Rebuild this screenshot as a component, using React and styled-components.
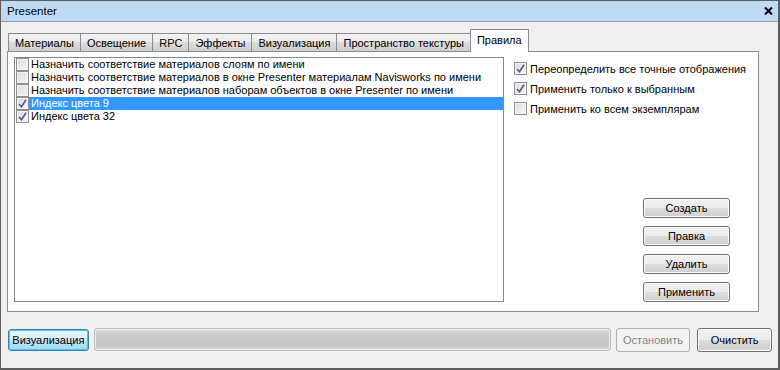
import React from "react";
import styled, { createGlobalStyle, css } from "styled-components";

const GlobalStyle = createGlobalStyle`
    html, body {
        margin: 0;
        padding: 0;
        background: #f0f0f0;
    }
    body {
        font-family: "Liberation Sans", Arial, sans-serif;
        font-size: 11px;
        color: #000;
    }
`;

const Window = styled.div`
    width: 780px;
    height: 370px;
    box-sizing: border-box;
    border: 1px solid #5e5e5e;
    border-right-width: 2px;
    border-bottom-width: 2px;
    background: #f0f0f0;
    display: flex;
    flex-direction: column;
`;

const TitleBar = styled.div`
    height: 20px;
    flex: none;
    background: #bfdbf3;
    border-bottom: 1px solid #8f9aa6;
    display: flex;
    align-items: center;
    justify-content: space-between;
    padding: 0 5px 0 6px;
    font-size: 11.5px;
`;

const Body = styled.div`
    flex: 1;
    display: flex;
    flex-direction: column;
    padding: 7px 6px 0 6px;
`;

const TabStrip = styled.div`
    display: flex;
    align-items: flex-end;
    padding-left: 2px;
    height: 22px;
    margin-right: 13px;
    position: relative;
    z-index: 1;
`;

const Tab = styled.div`
    box-sizing: border-box;
    height: 18px;
    padding: 0 6px;
    display: flex;
    align-items: center;
    border: 1px solid #898c95;
    border-bottom: none;
    margin-left: -1px;
    background: linear-gradient(#f3f3f3, #ebebeb 50%, #dddddd 50%, #cfcfcf);
    white-space: nowrap;

    ${props =>
        props.active &&
        css`
            height: 23px;
            margin: 0 0 -1px -1px;
            padding: 0 6px 2px 6px;
            background: #fff;
        `}
`;

const Panel = styled.div`
    box-sizing: border-box;
    height: 261px;
    margin-right: 13px;
    background: #fff;
    border: 1px solid #898c95;
    display: flex;
    padding: 5px 0 9px 6px;
`;

const List = styled.div`
    box-sizing: border-box;
    width: 490px;
    border: 1px solid #828790;
    padding: 0 0 0 1px;
`;

const Row = styled.div`
    display: flex;
    height: 13px;
    align-items: center;
`;

const RowLabel = styled.div`
    flex: 1;
    height: 13px;
    line-height: 13px;
    padding-left: 2px;
    white-space: nowrap;
    ${props =>
        props.selected &&
        css`
            background: #3399ff;
            color: #fff;
        `}
`;

const Side = styled.div`
    flex: 1;
    display: flex;
    flex-direction: column;
    padding: 5px 0 0 10px;
`;

const Option = styled.label`
    display: flex;
    align-items: center;
    gap: 3px;
    height: 13px;
    margin-bottom: 7px;
    white-space: nowrap;
`;

const ButtonStack = styled.div`
    margin-top: auto;
    align-self: flex-end;
    margin-right: 28px;
    display: flex;
    flex-direction: column;
    gap: 8px;
`;

const Button = styled.button`
    box-sizing: border-box;
    width: ${props => props.w || 87}px;
    height: ${props => props.h || 20}px;
    padding: 0;
    font: inherit;
    color: #000;
    border: 1px solid #707070;
    border-radius: 3px;
    background: linear-gradient(#f2f2f2, #ebebeb 50%, #dddddd 50%, #cfcfcf);
    box-shadow: inset 0 0 0 1px #fcfcfc;

    ${props =>
        props.primary &&
        css`
            border-color: #3c7fb1;
            background: linear-gradient(#eaf6fd, #d9f0fc 50%, #bee6fd 50%, #a7d9f5);
            box-shadow: inset 0 0 0 1px #48c7f8;
        `}

    ${props =>
        props.disabled &&
        css`
            border-color: #adb2b5;
            background: #f4f4f4;
            color: #838383;
            box-shadow: none;
        `}
`;

const BottomBar = styled.div`
    display: flex;
    align-items: center;
    gap: 5px;
    height: 23px;
    margin-top: 16px;
    padding-left: 1px;
`;

const Progress = styled.div`
    box-sizing: border-box;
    flex: none;
    width: 517px;
    height: 23px;
    border: 1px solid #bcbcbc;
    border-radius: 3px;
    background: linear-gradient(#e4e4e4, #cdcdcd 20%, #c6c6c6 80%, #d8d8d8);
    box-shadow: inset 0 0 0 1px #ededed;
`;

const ClearButton = styled(Button)`
    margin-left: 2px;
`;

const BoxShell = styled.span`
    box-sizing: border-box;
    flex: none;
    width: 13px;
    height: 13px;
    border: 1px solid #8f8f8f;
    background: linear-gradient(135deg, #dcdcdc, #f6f6f6);
    box-shadow: inset 0 0 0 1px #f4f4f4;
    display: inline-flex;
    align-items: center;
    justify-content: center;
`;

const CheckBox = ({ checked }) => (
    <BoxShell>
        {checked && (
            <svg width="9" height="9" viewBox="0 0 9 9">
                <path
                    d="M1 5 L3.5 7.8 L8 0.8"
                    fill="none"
                    stroke="#4a5f97"
                    strokeWidth="1.6"
                />
            </svg>
        )}
    </BoxShell>
);

const CloseIcon = () => (
    <svg width="9" height="8" viewBox="0 0 9 8">
        <path d="M1 0.5 L8 7.5 M8 0.5 L1 7.5" stroke="#000" strokeWidth="2" />
    </svg>
);

const tabs = [
    "Материалы",
    "Освещение",
    "RPC",
    "Эффекты",
    "Визуализация",
    "Пространство текстуры",
    "Правила",
];

const rules = [
    { text: "Назначить соответствие материалов слоям по имени", checked: false },
    {
        text: "Назначить соответствие материалов в окне Presenter материалам Navisworks по имени",
        checked: false,
    },
    {
        text: "Назначить соответствие материалов наборам объектов в окне Presenter по имени",
        checked: false,
    },
    { text: "Индекс цвета 9", checked: true, selected: true },
    { text: "Индекс цвета 32", checked: true },
];

const options = [
    { text: "Переопределить все точные отображения", checked: true },
    { text: "Применить только к выбранным", checked: true },
    { text: "Применить ко всем экземплярам", checked: false },
];

const App = () => (
    <>
        <GlobalStyle />
        <Window>
            <TitleBar>
                <span>Presenter</span>
                <CloseIcon />
            </TitleBar>
            <Body>
                <TabStrip>
                    {tabs.map(t => (
                        <Tab key={t} active={t === "Правила"}>
                            {t}
                        </Tab>
                    ))}
                </TabStrip>
                <Panel>
                    <List>
                        {rules.map(r => (
                            <Row key={r.text}>
                                <CheckBox checked={r.checked} />
                                <RowLabel selected={r.selected}>{r.text}</RowLabel>
                            </Row>
                        ))}
                    </List>
                    <Side>
                        {options.map(o => (
                            <Option key={o.text}>
                                <CheckBox checked={o.checked} />
                                {o.text}
                            </Option>
                        ))}
                        <ButtonStack>
                            <Button>Создать</Button>
                            <Button>Правка</Button>
                            <Button>Удалить</Button>
                            <Button>Применить</Button>
                        </ButtonStack>
                    </Side>
                </Panel>
                <BottomBar>
                    <Button primary w={81} h={22}>
                        Визуализация
                    </Button>
                    <Progress />
                    <Button disabled w={75} h={24}>
                        Остановить
                    </Button>
                    <ClearButton w={75} h={24}>
                        Очистить
                    </ClearButton>
                </BottomBar>
            </Body>
        </Window>
    </>
);

export default App;
